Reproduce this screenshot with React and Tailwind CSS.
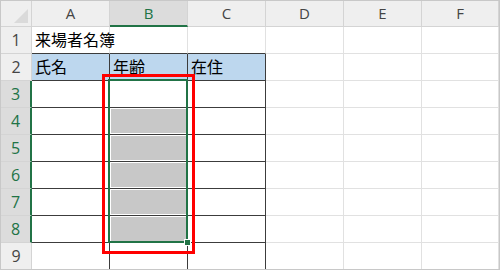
import React from 'react';

const COLS = ['A', 'B', 'C', 'D', 'E', 'F'];
const ROWS = [1, 2, 3, 4, 5, 6, 7, 8, 9];

const cells = {
  '1-0': '来場者名簿',
  '2-0': '氏名',
  '2-1': '年齢',
  '2-2': '在住',
};

const jp = { fontFamily: '"Noto Sans CJK JP", "Noto Sans", sans-serif' };
const ui = { fontFamily: '"Open Sans", "Noto Sans", sans-serif' };

function ColHeader({ label }) {
  const selected = label === 'B';
  return (
    <div
      style={ui}
      className={
        selected
          ? 'flex items-center justify-center border-r border-[#d4d4d4] border-b-2 border-b-[#217346] bg-[#dcdcdc] text-[15px] text-[#217346]'
          : 'flex items-center justify-center border-r border-b border-[#d4d4d4] bg-[#efefef] text-[15px] text-[#444]'
      }
    >
      {label}
    </div>
  );
}

function RowHeader({ n }) {
  const selected = n >= 3 && n <= 8;
  return (
    <div
      style={ui}
      className={
        selected
          ? 'flex items-center justify-center border-b border-[#d4d4d4] border-r-2 border-r-[#217346] bg-[#dcdcdc] text-[16px] text-[#217346]'
          : 'flex items-center justify-center border-r border-b border-[#d4d4d4] bg-[#efefef] text-[16px] text-[#444]'
      }
    >
      {n}
    </div>
  );
}

function Cell({ r, c }) {
  const inTable = r >= 2 && c <= 2;
  const topOfTable = r === 1 && c <= 2;
  const header = r === 2 && c <= 2;
  const shaded = c === 1 && r >= 4 && r <= 8;

  let cls = 'relative flex items-end pl-[3px] pb-[2px] whitespace-nowrap text-[16px] text-black border-r border-b';
  if (inTable) cls += ' border-[#3c3c3c]';
  else if (topOfTable) cls += ' border-r-[#e1e1e1] border-b-[#3c3c3c]';
  else cls += ' border-[#e1e1e1]';
  if (header) cls += ' bg-[#bdd7ee]';

  return (
    <div style={jp} className={cls}>
      {shaded && <div className="absolute inset-[1px] bg-[#c8c8c8]" />}
      <span className="relative">{cells[`${r}-${c}`]}</span>
    </div>
  );
}

export default function App() {
  return (
    <div className="w-[500px] h-[270px] overflow-hidden border border-[#c8c8c8] bg-white">
      <div className="relative grid grid-cols-[31px_78px_78px_78px_78px_78px_77px] grid-rows-[26px_27px_27px_27px_27px_27px_27px_27px_27px_27px]">
        <div className="relative border-r border-b border-[#d4d4d4] bg-[#efefef]">
          <svg className="absolute left-0 top-0" width="30" height="25" viewBox="0 0 30 25">
            <polygon points="13,22 27,22 27,8" fill="#dadada" />
          </svg>
        </div>
        {COLS.map((c) => (
          <ColHeader key={c} label={c} />
        ))}

        {ROWS.map((r) => (
          <React.Fragment key={r}>
            <RowHeader n={r} />
            {COLS.map((c, i) => (
              <Cell key={c} r={r} c={i} />
            ))}
          </React.Fragment>
        ))}

        {/* selection B3:B8 */}
        <div className="pointer-events-none absolute left-[107px] top-[78px] h-[164px] w-[80px] border-2 border-[#217346]" />
        <div className="absolute left-[183px] top-[238px] h-[7px] w-[7px] border border-white bg-[#217346]" />

        {/* red highlight */}
        <div className="pointer-events-none absolute left-[101px] top-[73px] h-[180px] w-[93px] border-[3px] border-[#ff0000]" />
      </div>
    </div>
  );
}
